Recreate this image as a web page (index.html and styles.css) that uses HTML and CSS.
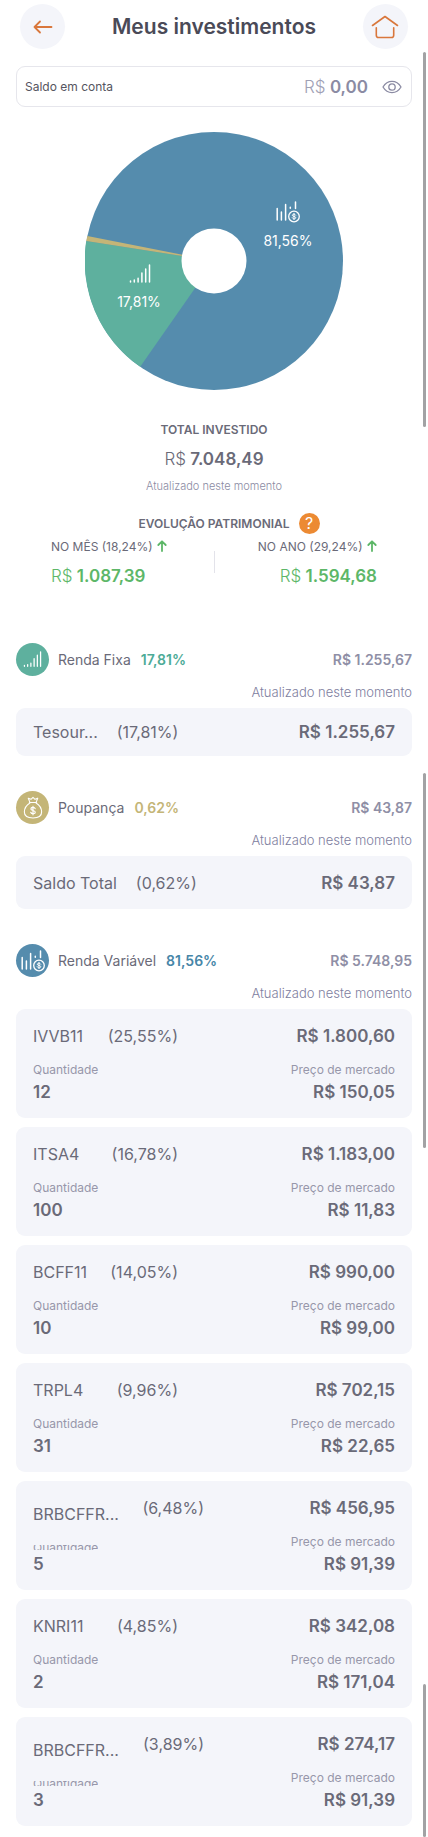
FILE: index.html
```html
<!DOCTYPE html>
<html lang="pt-BR">
<head>
    <meta charset="UTF-8">
    <meta name="viewport" content="width=device-width, initial-scale=1.0">
    <title>Meus investimentos</title>
    <link rel="stylesheet" href="styles.css">
</head>
<body>

    <!-- Shared icons -->
    <svg class="icon-defs" width="0" height="0" aria-hidden="true">
        <symbol id="icon-bars" viewBox="0 0 22 20">
            <path d="M1.5 17v1M5.3 16v2M9.1 14.3v3.7M12.9 9v9M16.7 5v13M20.5 1v17" fill="none" stroke="currentColor" stroke-width="1.5" stroke-linecap="round"/>
        </symbol>
        <symbol id="icon-stocks" viewBox="0 0 24 22">
            <path d="M1.2 7.5v11.5M5.4 11v8M9.6 3.5v15.5M14.3 6.2v1M19.5 1v6.5" fill="none" stroke="currentColor" stroke-width="1.5" stroke-linecap="round"/>
            <circle cx="18" cy="15.5" r="5.3" fill="none" stroke="currentColor" stroke-width="1.3"/>
            <path d="M19.8 14.2c-.5-1.4-3.5-1.3-3.5.1 0 1.5 3.5.8 3.5 2.4 0 1.5-3.200 1.5-3.700 0M18 12.400v6.200" fill="none" stroke="currentColor" stroke-width="1" stroke-linecap="round"/>
        </symbol>
        <symbol id="icon-bag" viewBox="0 0 22 26">
            <path d="M7.5 6.5L5.8 2.2l3 1.2L11 1.3l2.2 2.1 3-1.2-1.7 4.3M7 7h8M7.6 7.500C3.500 10 1.500 14 1.500 17.500c0 4.500 3.500 6.500 9.500 6.500s9.500-2 9.500-6.500c0-3.500-2-7.500-6.100-10" fill="none" stroke="currentColor" stroke-width="1.200" stroke-linecap="round" stroke-linejoin="round"/>
            <path d="M13.400 13.700c-.7-2-4.700-1.900-4.700.3 0 2.300 4.800 1.200 4.800 3.600 0 2.200-4.300 2.300-5 .1M11 11.200v9.300" fill="none" stroke="currentColor" stroke-width="1.300" stroke-linecap="round"/>
        </symbol>
        <symbol id="icon-up" viewBox="0 0 10 12">
            <path d="M5 11V1.500M1.300 5L5 1.300 8.700 5" fill="none" stroke="currentColor" stroke-width="1.800" stroke-linecap="round" stroke-linejoin="round"/>
        </symbol>
    </svg>

    <div class="header">
        <button class="round-button" aria-label="Voltar">
            <svg width="20" height="14" viewBox="0 0 20 14"><path d="M18.500 7H1.500M7 1.500L1.500 7 7 12.500" fill="none" stroke="currentColor" stroke-width="1.800" stroke-linecap="round" stroke-linejoin="round"/></svg>
        </button>
        <h1>Meus investimentos</h1>
        <button class="round-button" aria-label="Início">
            <svg width="28" height="24" viewBox="0 0 28 24"><path d="M1.500 10.500L14 1.500l12.500 9M5.300 12.800v7.400c0 1.500.8 2.300 2.300 2.300h12.800c1.500 0 2.300-.8 2.300-2.300v-7.400" fill="none" stroke="currentColor" stroke-width="1.600" stroke-linecap="round" stroke-linejoin="round"/></svg>
        </button>
    </div>

    <div class="balance">
        <span class="balance-label">Saldo em conta</span>
        <span class="balance-value"><span class="currency">R$</span> 0,00</span>
        <button class="eye" aria-label="Mostrar saldo">
            <svg width="20" height="14" viewBox="0 0 20 14"><path d="M1 7c4.500-7.500 13.500-7.500 18 0-4.500 7.500-13.500 7.500-18 0z" fill="none" stroke="currentColor" stroke-width="1.300" stroke-linejoin="round"/><circle cx="10" cy="7" r="3.200" fill="none" stroke="currentColor" stroke-width="1.300"/></svg>
        </button>
    </div>

    <svg class="chart" viewBox="0 0 258 258" role="img" aria-label="Distribuição dos investimentos">
        <circle class="slice-blue" cx="129" cy="129" r="129"/>
        <path class="slice-green" d="M129 129L55.200 234.800A129 129 0 0 1 1.200 109z"/>
        <path class="slice-gold" d="M129 129L1.200 109A129 129 0 0 1 2.400 104z"/>
        <circle class="hole" cx="129" cy="129" r="32.500"/>
        <use href="#icon-stocks" x="191" y="69" width="24" height="22"/>
        <text x="203" y="114">81,56%</text>
        <use href="#icon-bars" x="44" y="132" width="22" height="20"/>
        <text x="54" y="175">17,81%</text>
    </svg>

    <div class="total">
        <h2>TOTAL INVESTIDO</h2>
        <div class="total-value"><span class="currency">R$</span> 7.048,49</div>
        <div class="total-note">Atualizado neste momento</div>
    </div>

    <div class="evolution-title">
        <h2>EVOLUÇÃO PATRIMONIAL</h2>
        <button class="help" aria-label="Ajuda">?</button>
    </div>
    <div class="evolution">
        <div class="period">
            <div class="period-label">NO MÊS (18,24%) <svg width="10" height="12"><use href="#icon-up"/></svg></div>
            <div class="period-value"><span class="currency">R$</span> 1.087,39</div>
        </div>
        <div class="divider"></div>
        <div class="period right">
            <div class="period-label">NO ANO (29,24%) <svg width="10" height="12"><use href="#icon-up"/></svg></div>
            <div class="period-value"><span class="currency">R$</span> 1.594,68</div>
        </div>
    </div>

    <div class="group green">
        <div class="group-head">
            <span class="group-icon"><svg width="19" height="17"><use href="#icon-bars"/></svg></span>
            <span class="group-name">Renda Fixa</span>
            <span class="group-percent">17,81%</span>
            <span class="group-value">R$ 1.255,67</span>
        </div>
        <div class="group-note">Atualizado neste momento</div>
        <div class="card simple">
            <div class="asset"><span>Tesour...</span><span>(17,81%)</span></div>
            <strong>R$ 1.255,67</strong>
        </div>
    </div>

    <div class="group gold">
        <div class="group-head">
            <span class="group-icon"><svg width="20" height="24"><use href="#icon-bag"/></svg></span>
            <span class="group-name">Poupança</span>
            <span class="group-percent">0,62%</span>
            <span class="group-value">R$ 43,87</span>
        </div>
        <div class="group-note">Atualizado neste momento</div>
        <div class="card simple tall">
            <div class="asset"><span>Saldo Total</span><span>(0,62%)</span></div>
            <strong>R$ 43,87</strong>
        </div>
    </div>

    <div class="group blue">
        <div class="group-head">
            <span class="group-icon"><svg width="24" height="22"><use href="#icon-stocks"/></svg></span>
            <span class="group-name">Renda Variável</span>
            <span class="group-percent">81,56%</span>
            <span class="group-value">R$ 5.748,95</span>
        </div>
        <div class="group-note">Atualizado neste momento</div>

        <div class="card">
            <div class="row"><div class="asset"><span>IVVB11</span><span>(25,55%)</span></div><strong>R$ 1.800,60</strong></div>
            <div class="row labels"><span>Quantidade</span><span>Preço de mercado</span></div>
            <div class="row"><strong>12</strong><strong>R$ 150,05</strong></div>
        </div>
        <div class="card">
            <div class="row"><div class="asset"><span>ITSA4</span><span>(16,78%)</span></div><strong>R$ 1.183,00</strong></div>
            <div class="row labels"><span>Quantidade</span><span>Preço de mercado</span></div>
            <div class="row"><strong>100</strong><strong>R$ 11,83</strong></div>
        </div>
        <div class="card">
            <div class="row"><div class="asset"><span>BCFF11</span><span>(14,05%)</span></div><strong>R$ 990,00</strong></div>
            <div class="row labels"><span>Quantidade</span><span>Preço de mercado</span></div>
            <div class="row"><strong>10</strong><strong>R$ 99,00</strong></div>
        </div>
        <div class="card">
            <div class="row"><div class="asset"><span>TRPL4</span><span>(9,96%)</span></div><strong>R$ 702,15</strong></div>
            <div class="row labels"><span>Quantidade</span><span>Preço de mercado</span></div>
            <div class="row"><strong>31</strong><strong>R$ 22,65</strong></div>
        </div>
        <div class="card long">
            <div class="row"><div class="asset"><span class="name">BRBCFFR...</span><span>(6,48%)</span></div><strong>R$ 456,95</strong></div>
            <div class="row labels"><span class="clipped">Quantidade</span><span>Preço de mercado</span></div>
            <div class="row"><strong>5</strong><strong>R$ 91,39</strong></div>
        </div>
        <div class="card">
            <div class="row"><div class="asset"><span>KNRI11</span><span>(4,85%)</span></div><strong>R$ 342,08</strong></div>
            <div class="row labels"><span>Quantidade</span><span>Preço de mercado</span></div>
            <div class="row"><strong>2</strong><strong>R$ 171,04</strong></div>
        </div>
        <div class="card long">
            <div class="row"><div class="asset"><span class="name">BRBCFFR...</span><span>(3,89%)</span></div><strong>R$ 274,17</strong></div>
            <div class="row labels"><span class="clipped">Quantidade</span><span>Preço de mercado</span></div>
            <div class="row"><strong>3</strong><strong>R$ 91,39</strong></div>
        </div>
    </div>

    <!-- Scroll indicators -->
    <div class="scrollbar first"></div>
    <div class="scrollbar second"></div>
    <div class="scrollbar third"></div>

</body>
</html>
```

FILE: styles.css
```css
* {
    box-sizing: border-box;
}

body {
    position: relative;
    min-height: 100vh;
    margin: 0;
    padding: 4px 16px 0;
    font-family: Inter, "Liberation Sans", sans-serif;
    background-color: #ffffff;
    color: #6a6a78;
}

h1,
h2 {
    margin: 0;
}

button {
    border: none;
    padding: 0;
    font-family: inherit;
    cursor: pointer;
}

strong {
    font-size: 17px;
    font-weight: 600;
}

.icon-defs {
    position: absolute;
}

.currency {
    font-weight: 300;
}

.header {
    display: flex;
    align-items: center;
    justify-content: space-between;
    padding: 0 4px;
}

.header h1 {
    font-size: 21px;
    line-height: 28px;
    font-weight: 600;
    color: #4a4a57;
}

.round-button {
    display: flex;
    align-items: center;
    justify-content: center;
    width: 45px;
    height: 45px;
    border-radius: 50%;
    background-color: #f4f5fa;
    color: #d9773c;
}

.balance {
    display: flex;
    align-items: center;
    height: 41px;
    margin-top: 17px;
    padding: 0 9px 0 8px;
    border: 1px solid #e6e6ec;
    border-radius: 9px;
}

.balance-label {
    font-size: 12px;
    color: #555560;
}

.balance-value {
    margin-left: auto;
    font-size: 17px;
    font-weight: 600;
    color: #8b8ba3;
}

.balance-value .currency {
    color: #a0a0b4;
}

.eye {
    display: flex;
    margin-left: 14px;
    background: none;
    color: #8b8ba3;
}

.chart {
    display: block;
    width: 66%;
    max-width: 258px;
    margin: 25px auto 0;
}

.chart text {
    font-size: 14px;
    text-anchor: middle;
    fill: #ffffff;
}

.chart use {
    color: #ffffff;
}

.slice-blue {
    fill: #558cad;
}

.slice-green {
    fill: #5eb09e;
}

.slice-gold {
    fill: #c4b577;
}

.hole {
    fill: #ffffff;
}

.total {
    margin-top: 30px;
    text-align: center;
}

.total h2,
.evolution-title h2 {
    font-size: 12px;
    line-height: 20px;
    font-weight: 600;
}

.total-value {
    margin-top: 8px;
    font-size: 17px;
    line-height: 22px;
    font-weight: 600;
}

.total-note {
    margin-top: 8px;
    font-size: 11px;
    line-height: 16px;
    font-weight: 300;
    color: #8b8ba3;
}

.evolution-title {
    display: flex;
    align-items: center;
    justify-content: center;
    gap: 9px;
    margin-top: 19px;
    padding-left: 30px;
}

.help {
    width: 21px;
    height: 21px;
    border-radius: 50%;
    background-color: #ec8a33;
    color: #ffffff;
    font-size: 16px;
    line-height: 21px;
}

.evolution {
    display: grid;
    grid-template-columns: 1fr 1px 1fr;
    align-items: center;
    margin-top: 3px;
    padding: 0 35px;
}

.period-label {
    font-size: 12px;
    line-height: 20px;
}

.period-label svg {
    margin-left: 1px;
    color: #5db768;
    vertical-align: -1px;
}

.period-value {
    margin-top: 8px;
    font-size: 17px;
    line-height: 22px;
    font-weight: 600;
    color: #5db768;
}

.right {
    text-align: right;
}

.divider {
    height: 22px;
    background-color: #e3e3ea;
}

.group {
    margin-top: 35px;
}

.group.green {
    margin-top: 56px;
}

.group-head {
    display: flex;
    align-items: center;
    height: 33px;
    font-size: 14px;
}

.group-icon {
    display: flex;
    align-items: center;
    justify-content: center;
    width: 33px;
    height: 33px;
    margin-right: 9px;
    border-radius: 50%;
    color: #ffffff;
}

.group-percent {
    margin-left: 10px;
    font-weight: 600;
}

.group-value {
    margin-left: auto;
    font-weight: 600;
    color: #8f8fa6;
}

.green .group-icon {
    background-color: #5eb09e;
}

.green .group-percent {
    color: #4dab97;
}

.gold .group-icon {
    background-color: #c4b577;
}

.gold .group-percent {
    color: #c4b577;
}

.blue .group-icon {
    background-color: #558cad;
}

.blue .group-percent {
    color: #4786a8;
}

.group-note {
    margin: 7px 0;
    font-size: 13px;
    line-height: 18px;
    font-weight: 300;
    text-align: right;
    color: #8080a0;
}

.card {
    margin-bottom: 9px;
    padding: 16px 17px 15px;
    border-radius: 9px;
    background-color: #f4f5fa;
    font-size: 16px;
    line-height: 22px;
}

.card.simple {
    display: flex;
    justify-content: space-between;
    margin-bottom: 0;
    padding: 13px 17px;
}

.card.simple.tall {
    padding: 16px 17px 15px;
}

.row {
    display: flex;
    justify-content: space-between;
}

.asset {
    display: flex;
    justify-content: space-between;
    gap: 19px;
    min-width: 145px;
}

.labels {
    margin: 14px 0 2px;
    font-size: 12px;
    line-height: 18px;
    color: #9797aa;
}

/* Long names drop lower and cut into the label below */
.long .asset {
    min-width: 171px;
}

.long .name {
    height: 22px;
    padding-top: 6px;
}

.clipped {
    height: 5px;
    line-height: 5px;
    margin-top: 12px;
    overflow: hidden;
}

.scrollbar {
    position: absolute;
    right: 2px;
    width: 3px;
    border-radius: 2px;
    background-color: #a2a2a4;
}

.scrollbar.first {
    top: 52px;
    height: 375px;
}

.scrollbar.second {
    top: 773px;
    height: 375px;
}

.scrollbar.third {
    top: 1684px;
    bottom: 0;
}
```
